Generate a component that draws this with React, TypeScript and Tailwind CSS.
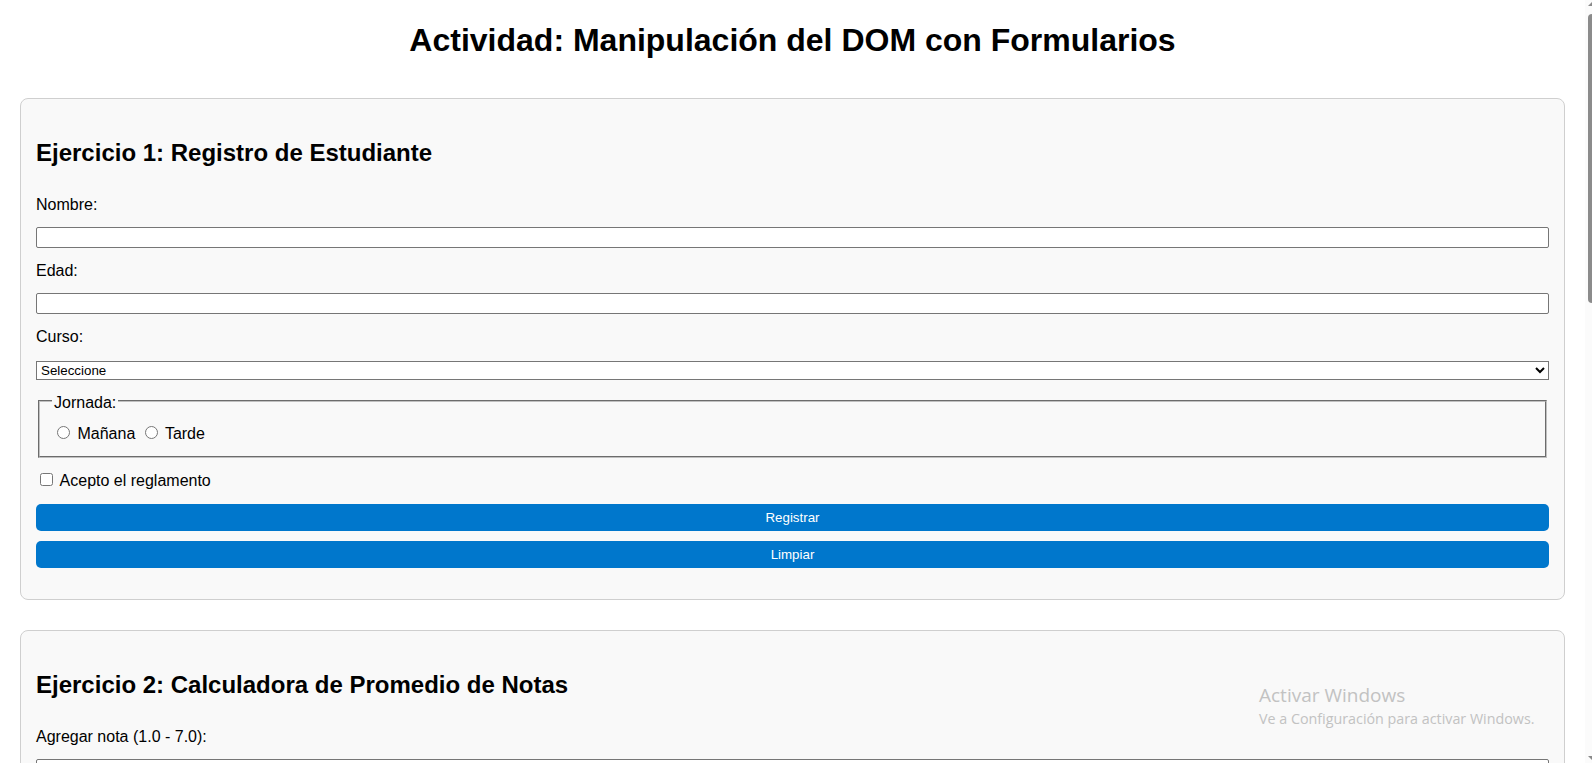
import { useState } from 'react';

/* ── form field: label on its own line, full-width control below ── */
function Field({ label, children }: { label: string; children: React.ReactNode }) {
  return (
    <div>
      <label className="block text-[16px] leading-[18px]">{label}</label>
      <div className="mt-[13px] mb-[14px]">{children}</div>
    </div>
  );
}

const inputCls =
  'block w-full h-[21px] px-[2px] bg-white border border-[#767676] rounded-[2px] text-[13.33px] text-black outline-none';

const btnCls =
  'block w-full h-[27px] rounded-[5px] bg-[#0077cc] text-white text-[13.33px] leading-[27px] text-center cursor-pointer';

function Card({ title, children, className = '' }: { title: string; children: React.ReactNode; className?: string }) {
  return (
    <section className={`border border-[#cfcfcf] rounded-[8px] bg-[#f9f9f9] px-[15px] pt-[40px] pb-[31px] ${className}`}>
      <h2 className="text-[24px] leading-[28px] font-bold mb-[29px]">{title}</h2>
      {children}
    </section>
  );
}

export default function App() {
  const [nombre, setNombre] = useState('');
  const [edad, setEdad] = useState('');
  const [curso, setCurso] = useState('');
  const [jornada, setJornada] = useState('');
  const [acepto, setAcepto] = useState(false);
  const [nota, setNota] = useState('');
  const [notas, setNotas] = useState<number[]>([]);

  const limpiar = () => {
    setNombre('');
    setEdad('');
    setCurso('');
    setJornada('');
    setAcepto(false);
  };

  const promedio = notas.length ? (notas.reduce((a, b) => a + b, 0) / notas.length).toFixed(1) : '-';

  return (
    <div className="relative flex h-[763px] overflow-hidden bg-white text-black font-['Liberation_Sans',Arial,sans-serif]">
      {/* ── PAGE ── */}
      <main className="w-[1585px] shrink-0 px-[20px]">
        <h1 className="mt-[22px] text-center text-[32px] leading-[37px] font-bold">
          Actividad: Manipulación del DOM con Formularios
        </h1>

        {/* ── EJERCICIO 1 ── */}
        <Card title="Ejercicio 1: Registro de Estudiante" className="mt-[39px]">
          <Field label="Nombre:">
            <input className={inputCls} value={nombre} onChange={e => setNombre(e.target.value)} />
          </Field>
          <Field label="Edad:">
            <input className={inputCls} value={edad} onChange={e => setEdad(e.target.value)} />
          </Field>

          <label className="block text-[16px] leading-[18px]">Curso:</label>
          <select
            className="block w-full h-[19px] mt-[15px] bg-white border border-[#767676] text-[13.33px] text-black"
            value={curso}
            onChange={e => setCurso(e.target.value)}
          >
            <option value="">Seleccione</option>
            <option value="1A">1° Medio A</option>
            <option value="2A">2° Medio A</option>
            <option value="3A">3° Medio A</option>
          </select>

          <fieldset className="mx-[2px] mt-[12px] border-2 [border-style:groove] border-[#c0c0c0] px-[12px] pt-[13px] pb-[13px]">
            <legend className="relative top-[2px] px-[2px] text-[16px] leading-[18px]">Jornada:</legend>
            <div className="text-[16px] leading-[18px]">
              <input
                type="radio"
                name="jornada"
                className="mt-[3px] mr-[3px] ml-[5px]"
                checked={jornada === 'm'}
                onChange={() => setJornada('m')}
              />{' '}
              Mañana{' '}
              <input
                type="radio"
                name="jornada"
                className="mt-[3px] mr-[3px] ml-[5px]"
                checked={jornada === 't'}
                onChange={() => setJornada('t')}
              />{' '}
              Tarde
            </div>
          </fieldset>

          <div className="mt-[12px] text-[16px] leading-[18px]">
            <input
              type="checkbox"
              className="mt-[3px] mr-[3px] ml-[4px]"
              checked={acepto}
              onChange={e => setAcepto(e.target.checked)}
            />{' '}
            Acepto el reglamento
          </div>

          <button className={`${btnCls} mt-[14px]`}>Registrar</button>
          <button className={`${btnCls} mt-[10px]`} onClick={limpiar}>
            Limpiar
          </button>
        </Card>

        {/* ── EJERCICIO 2 ── */}
        <Card title="Ejercicio 2: Calculadora de Promedio de Notas" className="mt-[30px]">
          <Field label="Agregar nota (1.0 - 7.0):">
            <input className={inputCls} value={nota} onChange={e => setNota(e.target.value)} />
          </Field>
          <button
            className={btnCls}
            onClick={() => {
              const n = parseFloat(nota);
              if (n >= 1 && n <= 7) setNotas([...notas, n]);
              setNota('');
            }}
          >
            Agregar nota
          </button>
          <p className="mt-[16px] text-[16px]">Promedio: {promedio}</p>
        </Card>
      </main>

      {/* ── SCROLLBAR ── */}
      <div className="relative w-[7px] shrink-0 bg-[#fbfbfb]">
        <svg className="absolute right-0 top-[2px]" width="4" height="4" viewBox="0 0 4 4">
          <path d="M4 0 L4 4 L0 4 Z" fill="#8a8a8a" />
        </svg>
        <div className="ml-[3px] mt-[14px] h-[289px] w-[4px] rounded-l-full bg-[#8b8b8b]" />
        <svg className="absolute right-0 bottom-[3px]" width="4" height="4" viewBox="0 0 4 4">
          <path d="M0 0 L4 0 L4 4 Z" fill="#8a8a8a" />
        </svg>
      </div>

      {/* ── WINDOWS WATERMARK ── */}
      <div className="pointer-events-none absolute left-[1259px] top-[682px] font-['Open_Sans','Noto_Sans',sans-serif] text-[#c2c2c2]">
        <div className="text-[19px] leading-[26px]">Activar Windows</div>
        <div className="mt-[2px] text-[14.3px] leading-[17px]">Ve a Configuración para activar Windows.</div>
      </div>
    </div>
  );
}
